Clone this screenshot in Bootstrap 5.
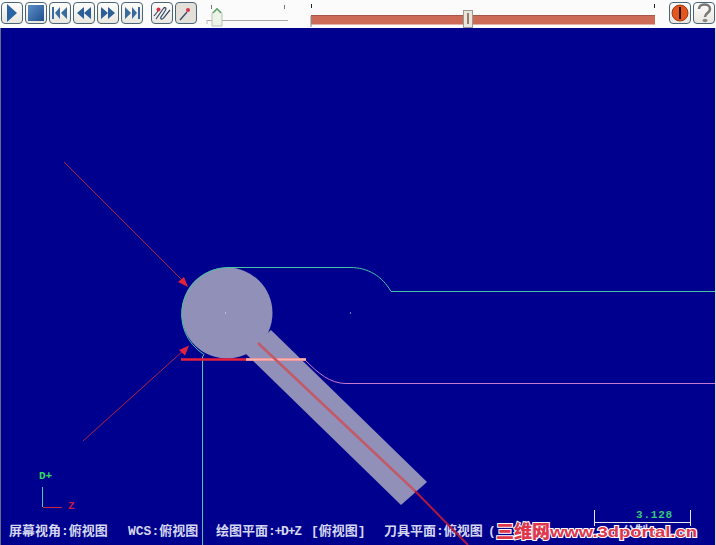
<!DOCTYPE html>
<html lang="zh">
<head>
<meta charset="utf-8">
<title>Mastercam</title>
<link href="https://cdn.jsdelivr.net/npm/bootstrap@5.3.0/dist/css/bootstrap.min.css" rel="stylesheet">
<style>
html,body{margin:0;width:716px;height:545px;overflow:hidden;background:#fbfbfb}
.tool-strip{height:28px;padding:2px 0 0 1px;background:#fbfbfb}
.tool-btn{width:22px;height:22px;padding:0;border:1px solid #4a6578;border-radius:4px;background:linear-gradient(#fdfdfb,#e8e6df);display:flex;align-items:center;justify-content:center;flex:none}
.tool-btn svg{display:block}
.tool-btn.pressed{background:#e3e0da}
.strip-gap-a{margin-left:2px}
.strip-gap-b{margin-left:8px}
.slider-small{width:84px;margin-left:9px;height:26px;flex:none;display:block}
.slider-big{width:350px;margin-left:20px;height:26px;flex:none;display:block}
.strip-right{margin-left:auto;padding-right:1px}
.stage{display:block;width:716px;height:517px;background:#00008f;border-left:1px solid #6a6f80;border-right:1px solid #d8d8e0}
.hud{font-family:"Liberation Mono","Noto Sans CJK SC",monospace;font-size:13px;fill:#d5d8ef;font-weight:700}
.hud-mono{font-family:"Liberation Mono",monospace;font-size:11px;font-weight:700}
.mark-text{font-family:"Liberation Sans",sans-serif;font-size:15px;font-weight:700;fill:#e0364c;stroke:#fff;stroke-width:2px;paint-order:stroke}
.mark-cn{font-family:"Noto Sans CJK SC",sans-serif;font-size:18px;font-weight:900;fill:#e0364c;stroke:#fff;stroke-width:2px;paint-order:stroke}
</style>
</head>
<body>
<div class="tool-strip d-flex align-items-start">
  <button class="tool-btn" type="button" aria-label="play"><svg width="14" height="18" viewBox="0 0 14 18"><path d="M2 0 12 9 2 18Z" fill="#2a63a4"/></svg></button>
  <button class="tool-btn strip-gap-a" type="button" aria-label="stop"><svg width="18" height="18" viewBox="0 0 18 18"><defs><linearGradient id="g1" x2="1" y2="1"><stop offset="0" stop-color="#5c8fc6"/><stop offset="1" stop-color="#1f4f8e"/></linearGradient></defs><rect x="1" y="1" width="16" height="16" fill="url(#g1)"/></svg></button>
  <button class="tool-btn strip-gap-a" type="button" aria-label="first"><svg width="18" height="14" viewBox="0 0 18 14"><path d="M1 1h2v12H1ZM9 1v12L4 7ZM16 1v12L10 7Z" fill="#3b6a9e"/></svg></button>
  <button class="tool-btn strip-gap-a" type="button" aria-label="back"><svg width="18" height="14" viewBox="0 0 18 14"><path d="M9 1v12L2 7ZM16 1v12L9 7Z" fill="#2c5f98"/></svg></button>
  <button class="tool-btn strip-gap-a" type="button" aria-label="forward"><svg width="18" height="14" viewBox="0 0 18 14"><path d="M2 1v12l7-6ZM9 1v12l7-6Z" fill="#2c5f98"/></svg></button>
  <button class="tool-btn strip-gap-a" type="button" aria-label="last"><svg width="18" height="14" viewBox="0 0 18 14"><path d="M2 1v12l6-6ZM9 1v12l5-6ZM15 1h2v12h-2Z" fill="#3b6a9e"/></svg></button>
  <button class="tool-btn strip-gap-b" type="button" aria-label="path"><svg width="20" height="20" viewBox="0 0 20 20"><path d="M2 13 6 8" stroke="#34496a" stroke-width="1.200"/><path d="M4 16 11 6C13 3 15 5 13 8L9 14C8 16 10 17 11.500 15L18 7" fill="none" stroke="#34496a" stroke-width="1.200"/><circle cx="6.500" cy="6.500" r="2" fill="#d8334a"/></svg></button>
  <button class="tool-btn pressed strip-gap-a" type="button" aria-label="tool"><svg width="18" height="18" viewBox="0 0 18 18"><path d="M3 16 10 8" stroke="#34496a" stroke-width="1.400"/><circle cx="11" cy="6" r="2" fill="#d8334a"/></svg></button>
  <svg class="slider-small" viewBox="0 0 84 26"><path d="M5.500 3v4M78.500 3v4" stroke="#777"/><path d="M1 18.500h81" stroke="#a9a9a9" stroke-width="1.200"/><path d="M1 18v4" stroke="#bbb"/><path d="M6 16v-5l5-5 5 5v13H6Z" fill="#eef3ea" stroke="#b4c2b4"/><path d="M7 11l4-4 4 4" fill="none" stroke="#59a66b" stroke-width="1.300"/></svg>
  <svg class="slider-big" viewBox="0 0 350 26"><path d="M1.500 2v4M344.500 2v4" stroke="#222"/><rect x="1" y="13" width="344" height="9.500" fill="#cc6b58"/><path d="M1 13.500h344" stroke="#a5584a"/><path d="M1 14v11" stroke="#888"/><rect x="153.500" y="8.500" width="9" height="17" fill="#e9e6de" stroke="#9a9a92"/><path d="M158 11v11" stroke="#7a5a48" stroke-width="1.500"/></svg>
  <div class="strip-right d-flex">
    <button class="tool-btn" type="button" aria-label="stop sign"><svg width="18" height="18" viewBox="0 0 18 18"><circle cx="9" cy="9" r="8" fill="#e3561f" stroke="#9a3a14"/><path d="M9 3v12" stroke="#2a1408" stroke-width="2"/></svg></button>
    <button class="tool-btn strip-gap-a" type="button" aria-label="help"><svg width="18" height="20" viewBox="0 0 18 20"><path d="M4 6c0-6 11-6 11 0 0 4-5 4-5 8" fill="none" stroke="#777" stroke-width="2.500"/><ellipse cx="10" cy="17.500" rx="2.500" ry="1.700" fill="#888"/></svg></button>
  </div>
</div>
<svg class="stage" viewBox="1 28 714 517" preserveAspectRatio="none" xmlns="http://www.w3.org/2000/svg">
  <rect x="0" y="28" width="716" height="517" fill="#00008f"/>
  <path d="M202.500 357V545" stroke="#49c9a8"/>
  <path d="M305 360C318 373 330 383.500 346 383.500H715" fill="none" stroke="#c878d0"/>
  <circle cx="227" cy="313" r="45.500" fill="#9090b8"/>
  <path d="M271 330 427 482 401 505 245 353Z" fill="#9090b8"/>
  <path d="M202.500 357 204 354.500A47 47 0 0 1 227 267.500H350C368 267.500 382 276 391 291.500H715" fill="none" stroke="#45c4a6"/>
  <path d="M64 162 184 282" stroke="#b8243c"/>
  <path d="M83 441 184 350" stroke="#b8243c"/>
  <path d="M188 287 178 282 184 277Z" fill="#e0223a"/>
  <path d="M189 345.500 179 350 185 355.500Z" fill="#e0223a"/>
  <path d="M181 359.500H306" stroke="#e8203c" stroke-width="2.500"/>
  <path d="M246 359.500H306" stroke="#f7b4b0" stroke-width="2.500"/>
  <path d="M225 313h1M350 313h1" stroke="#e6e6ff"/>
  <path d="M42.500 487V507" stroke="#49c9a8"/>
  <path d="M43 507.500H62" stroke="#c5283f"/>
  <text class="hud-mono" x="39" y="479" fill="#2ddc60">D+</text>
  <text class="hud-mono" x="68" y="509" fill="#c8184a">Z</text>
  <text class="hud" x="9" y="535">屏幕视角:俯视图</text>
  <text class="hud" x="128" y="535">WCS:俯视图</text>
  <text class="hud" y="535"><tspan x="216">绘图平面</tspan><tspan x="268" textLength="34">:+D+Z</tspan><tspan x="311">[俯视图]</tspan></text>
  <text class="hud" x="384" y="535">刀具平面:俯视图</text>
  <text class="hud" x="488" y="535">(</text>
  <text class="hud" x="622" y="535">公制</text>
  <path d="M258 343 415 491" stroke="#c25a68" stroke-width="2.500"/>
  <path d="M415 491 468 545" stroke="#b01840" stroke-width="2"/>
  <path d="M594.500 510v16M690.500 510v16M594 522.500H691" stroke="#e8e8f0" fill="none"/>
  <text class="hud-mono" x="636" y="518" fill="#35c878" style="letter-spacing:.8px">3.128</text>
  <text class="mark-cn" x="496" y="538">三维网</text>
  <text class="mark-text" x="550" y="537" textLength="147" lengthAdjust="spacingAndGlyphs">www.3dportal.cn</text>
</svg>
<script src="https://cdn.jsdelivr.net/npm/bootstrap@5.3.0/dist/js/bootstrap.bundle.min.js"></script>
</body>
</html>
